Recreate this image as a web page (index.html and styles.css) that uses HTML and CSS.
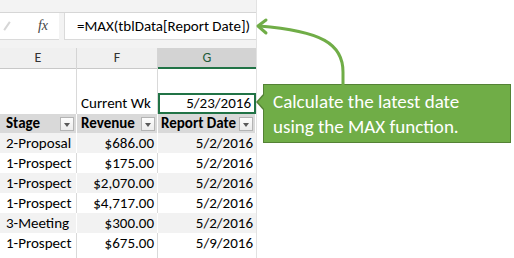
FILE: index.html
```html
<!DOCTYPE html>
<html lang="en">
<head>
<meta charset="UTF-8">
<title>MAX latest date</title>
<link rel="stylesheet" href="styles.css">
</head>
<body>

<!-- ─── SHEET ───────────────────────────────────────────────────────────── -->
<div class="sheet">
  <div class="ribbon"></div>

  <!-- formula bar -->
  <div class="fbar">
    <div class="namebox">
      <span class="mark"></span>
      <span class="fx">fx</span>
    </div>
    <div class="formula">=MAX(tblData[Report Date])</div>
  </div>

  <!-- column letters -->
  <div class="cols">
    <div class="col">E</div>
    <div class="col">F</div>
    <div class="col active">G</div>
  </div>

  <!-- cells -->
  <div class="grid">
    <div class="row blank"><div></div><div></div><div></div></div>

    <div class="row wk">
      <div></div>
      <div class="txt">Current Wk</div>
      <div class="num selected">5/23/2016</div>
    </div>

    <div class="row head">
      <div>Stage<span class="dd"></span></div>
      <div>Revenue<span class="dd"></span></div>
      <div>Report Date<span class="dd"></span></div>
    </div>

    <div class="row band"><div class="txt">2-Proposal</div><div class="num">$686.00</div><div class="num">5/2/2016</div></div>
    <div class="row"><div class="txt">1-Prospect</div><div class="num">$175.00</div><div class="num">5/2/2016</div></div>
    <div class="row band"><div class="txt">1-Prospect</div><div class="num">$2,070.00</div><div class="num">5/2/2016</div></div>
    <div class="row"><div class="txt">1-Prospect</div><div class="num">$4,717.00</div><div class="num">5/2/2016</div></div>
    <div class="row band"><div class="txt">3-Meeting</div><div class="num">$300.00</div><div class="num">5/2/2016</div></div>
    <div class="row"><div class="txt">1-Prospect</div><div class="num">$675.00</div><div class="num">5/9/2016</div></div>
    <div class="row blank"><div></div><div></div><div></div></div>
  </div>
</div>

<!-- ─── CALLOUT ─────────────────────────────────────────────────────────── -->
<div class="callout">Calculate the latest date<br>using the MAX function.</div>

<svg class="arrow" width="514" height="258" viewBox="0 0 514 258">
  <path d="M343 85 L343 72 C343 44 322 31 259 26" fill="none" stroke="#70ad47" stroke-width="3"/>
  <path d="M266 20 L258 26 L266 33" fill="none" stroke="#70ad47" stroke-width="3" stroke-linecap="round" stroke-linejoin="round"/>
</svg>

</body>
</html>
```

FILE: styles.css
```css
:root{
  --grid: #d9d9d9;
  --xl-green: #217346;
  --callout: #70ad47;
}
*{ box-sizing:border-box; }

body{
  margin:0;
  width:514px; height:258px;
  overflow:hidden;
  background:#fff;
  font-family: Carlito, Calibri, Lato, sans-serif;
  font-size:15px;
  color:#000;
  position:relative;
}

/* the spreadsheet strip on the left */
.sheet{
  width:257px;
  border-right:1px solid #e2e2e2;
}

.ribbon{
  height:13px;
  background:#f3f3f3;
  border-bottom:1px solid #d6d6d6;
}

/* formula bar */
.fbar{
  height:35px;
  background:#f3f3f3;
  display:flex;
  padding-bottom:8px;
  gap:5px;
}
.namebox{
  width:59px;
  background:#fff;
  border-bottom:1px solid #dadada;
  display:flex;
  align-items:center;
  justify-content:space-between;
  padding:0 11px 0 6px;
}
.mark{
  width:2px; height:10px;
  background:#d6d6d6;
  transform:rotate(35deg);
}
.fx{
  font-family:"Liberation Serif", serif;
  font-style:italic;
  font-size:14px;
  color:#444;
}
.formula{
  flex:1;
  background:#fff;
  border-bottom:1px solid #dadada;
  border-left:1px solid #dadada;
  padding-left:12px;
  line-height:26px;
  font-size:15px;
}

/* column letters */
.cols{
  display:grid;
  grid-template-columns:77px 81px 98px;
  height:20px;
  background:#f0f0f0;
}
.col{
  text-align:center;
  line-height:19px;
  font-size:14px;
  color:#333;
  border-right:1px solid #d4d4d4;
  border-bottom:1px solid #c8c8c8;
}
.col.active{
  background:#d3d3d3;
  color:#1e5c3a;
  border-bottom:2px solid var(--xl-green);
  border-right:none;
}

/* cell rows */
.row{
  display:grid;
  grid-template-columns:77px 81px 98px;
  height:20px;
  line-height:20px;
}
.row > div{
  border-right:1px solid var(--grid);
  white-space:nowrap;
  overflow:hidden;
}
.row > div:last-child{ border-right:none; }
.row.blank{ height:25px; }
.row.blank:last-child{ height:5px; }
.row.wk{ height:21px; line-height:20px; }
.row.wk .txt{ padding-left:4px; }
.txt{ padding-left:6px; }
.num{ text-align:right; padding-right:3px; }

.selected{
  border:2px solid var(--xl-green) !important;
  line-height:17px;
  position:relative;
}

/* table header row */
.row.head{
  height:19px;
  line-height:19px;
  background:#d9d9d9;
  font-weight:bold;
}
.row.head > div{
  position:relative;
  padding-left:5px;
  border-right:1px solid #fff;
}
.row.head > div:first-child{ padding-left:6px; }
.row.head > div:nth-child(2){ padding-left:4px; }
.row.head > div:last-child{ padding-left:3px; }

/* filter dropdown buttons */
.dd{
  position:absolute;
  right:2px; top:3px;
  width:14px; height:14px;
  background:linear-gradient(#fdfdfd,#ececec);
  border:1px solid #b4b4b4;
}
.dd::after{
  content:"";
  position:absolute;
  left:3px; top:5px;
  border-left:3.5px solid transparent;
  border-right:3.5px solid transparent;
  border-top:4px solid #595959;
}

.row.band{ background:#f2f2f2; }
.row.band > div{ border-right-color:#fff; }

/* green callout box */
.callout{
  position:absolute;
  left:263px; top:84px;
  width:248px; height:59px;
  background:var(--callout);
  border:1px solid #548235;
  color:#fff;
  font-size:19px;
  line-height:25px;
  padding:4px 0 0 9px;
}
.callout::before{
  content:"";
  position:absolute;
  left:-8px; top:8px;
  border-top:9px solid transparent;
  border-bottom:9px solid transparent;
  border-right:8px solid #548235;
}
.callout::after{
  content:"";
  position:absolute;
  left:-6px; top:9px;
  border-top:8px solid transparent;
  border-bottom:8px solid transparent;
  border-right:7px solid var(--callout);
}

.arrow{
  position:absolute;
  left:0; top:0;
  pointer-events:none;
}
```
